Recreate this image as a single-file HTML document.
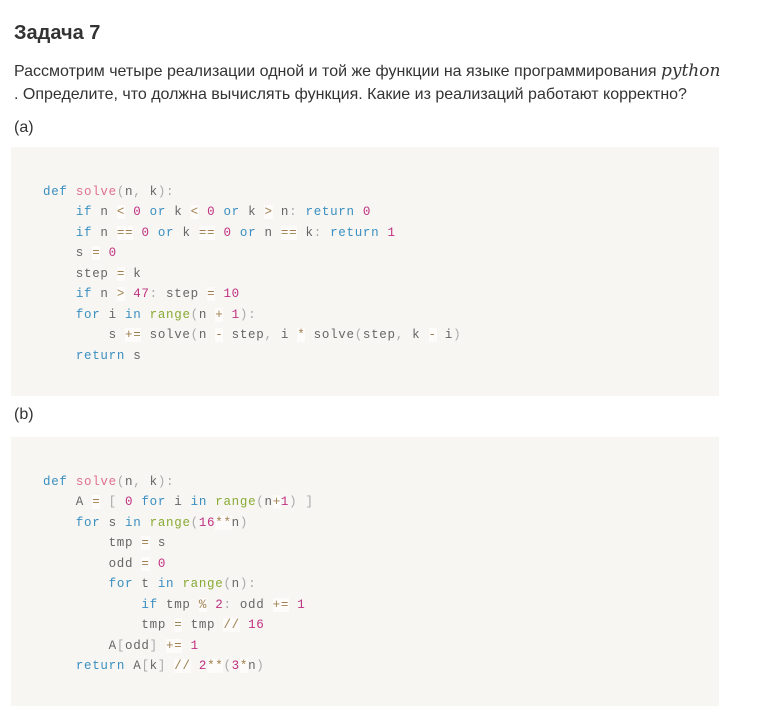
<!DOCTYPE html>
<html><head><meta charset="utf-8"><style>
body{margin:0;background:#fff;font-family:"Liberation Sans",sans-serif;color:#333;width:763px;height:715px;overflow:hidden;position:relative}
.t{position:absolute;left:14px;white-space:nowrap}
h1{position:absolute;left:14px;top:22px;margin:0;font-size:20px;font-weight:bold;color:#333}
.p{font-size:16px}
.py{font-family:"DejaVu Serif","Liberation Serif",serif;font-style:italic;font-size:17px}
.code{position:absolute;left:11px;width:708px;background:#f7f6f3;margin:0;box-sizing:border-box;padding:35px 0 0 32px;font-family:"Liberation Mono",monospace;font-size:12.5px;letter-spacing:0.7px;line-height:20.45px;color:#666;white-space:pre}
.k{color:#3a8fc0}.f{color:#e07090}.n{color:#c03080}.g{color:#88aa33}.o{color:#a08050;background:#fdfcfa}.u{color:#aaa}
</style></head><body>
<h1>Задача 7</h1>
<div class="t p" style="top:61px">Рассмотрим четыре реализации одной и той же функции на языке программирования <span class="py">python</span></div>
<div class="t p" style="top:86px">. Определите, что должна вычислять функция. Какие из реализаций работают корректно?</div>
<div class="t p" style="top:119px">(a)</div>
<pre class="code" style="top:147px;height:249px"><span class="k">def</span> <span class="f">solve</span><span class="u">(</span>n<span class="u">,</span> k<span class="u">):</span>
    <span class="k">if</span> n <span class="o">&lt;</span> <span class="n">0</span> <span class="k">or</span> k <span class="o">&lt;</span> <span class="n">0</span> <span class="k">or</span> k <span class="o">&gt;</span> n<span class="u">:</span> <span class="k">return</span> <span class="n">0</span>
    <span class="k">if</span> n <span class="o">==</span> <span class="n">0</span> <span class="k">or</span> k <span class="o">==</span> <span class="n">0</span> <span class="k">or</span> n <span class="o">==</span> k<span class="u">:</span> <span class="k">return</span> <span class="n">1</span>
    s <span class="o">=</span> <span class="n">0</span>
    step <span class="o">=</span> k
    <span class="k">if</span> n <span class="o">&gt;</span> <span class="n">47</span><span class="u">:</span> step <span class="o">=</span> <span class="n">10</span>
    <span class="k">for</span> i <span class="k">in</span> <span class="g">range</span><span class="u">(</span>n <span class="o">+</span> <span class="n">1</span><span class="u">):</span>
        s <span class="o">+=</span> solve<span class="u">(</span>n <span class="o">-</span> step<span class="u">,</span> i <span class="o">*</span> solve<span class="u">(</span>step<span class="u">,</span> k <span class="o">-</span> i<span class="u">)</span>
    <span class="k">return</span> s</pre>
<div class="t p" style="top:406px">(b)</div>
<pre class="code" style="top:437px;height:269px"><span class="k">def</span> <span class="f">solve</span><span class="u">(</span>n<span class="u">,</span> k<span class="u">):</span>
    A <span class="o">=</span> <span class="u">[</span> <span class="n">0</span> <span class="k">for</span> i <span class="k">in</span> <span class="g">range</span><span class="u">(</span>n<span class="o">+</span><span class="n">1</span><span class="u">) ]</span>
    <span class="k">for</span> s <span class="k">in</span> <span class="g">range</span><span class="u">(</span><span class="n">16</span><span class="o">**</span>n<span class="u">)</span>
        tmp <span class="o">=</span> s
        odd <span class="o">=</span> <span class="n">0</span>
        <span class="k">for</span> t <span class="k">in</span> <span class="g">range</span><span class="u">(</span>n<span class="u">):</span>
            <span class="k">if</span> tmp <span class="o">%</span> <span class="n">2</span><span class="u">:</span> odd <span class="o">+=</span> <span class="n">1</span>
            tmp <span class="o">=</span> tmp <span class="o">//</span> <span class="n">16</span>
        A<span class="u">[</span>odd<span class="u">]</span> <span class="o">+=</span> <span class="n">1</span>
    <span class="k">return</span> A<span class="u">[</span>k<span class="u">]</span> <span class="o">//</span> <span class="n">2</span><span class="o">**</span><span class="u">(</span><span class="n">3</span><span class="o">*</span>n<span class="u">)</span></pre>
</body></html>
